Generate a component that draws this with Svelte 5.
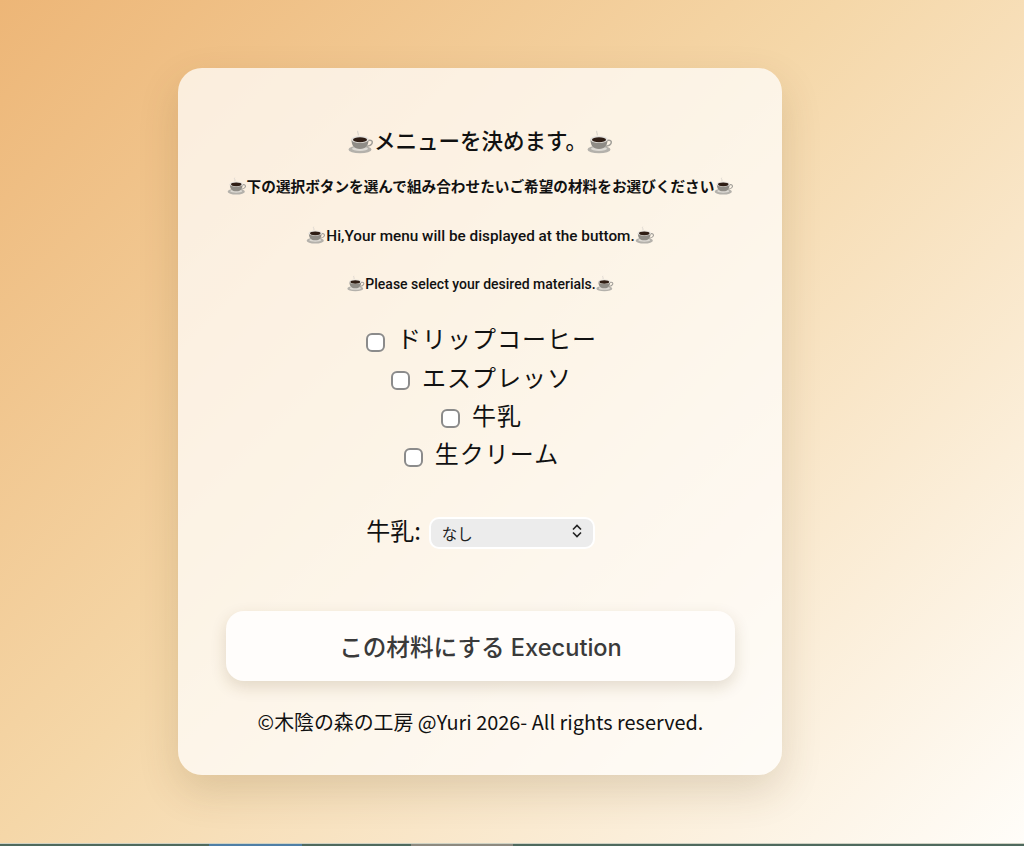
<script>
  let materials = ['ドリップコーヒー', 'エスプレッソ', '牛乳', '生クリーム'];
  let milk = 'なし';
</script>

{#snippet cup()}
  <svg class="cup" viewBox="0 0 26 24" aria-hidden="true">
    <path d="M10 1c-1.500 1.500 1.500 2.500 0 4.500" fill="none" stroke="#d9d4cd" stroke-width="1.200" />
    <ellipse cx="12" cy="19.500" rx="11.500" ry="3.800" fill="#b4b1ab" />
    <ellipse cx="12" cy="18.800" rx="8" ry="2.200" fill="#dcd9d3" />
    <path d="M3.500 9.500c0 6 2.500 9.500 8.500 9.500s8.500-3.500 8.500-9.500z" fill="#8f8c86" />
    <path d="M20 10.500c3.500-1 5 .8 4 3-.8 1.700-3 2.500-5.500 2.800" fill="none" stroke="#a19e98" stroke-width="1.500" />
    <ellipse cx="12" cy="9.500" rx="8.800" ry="3.400" fill="#e4e1dc" />
    <ellipse cx="12" cy="9.800" rx="7" ry="2.500" fill="#2e1d14" />
  </svg>
{/snippet}

<main class="page">
  <section class="card">
    <h1>{@render cup()}メニューを決めます。{@render cup()}</h1>
    <p class="ja">{@render cup()}下の選択ボタンを選んで組み合わせたいご希望の材料をお選びください{@render cup()}</p>
    <p class="en">{@render cup()}Hi,Your menu will be displayed at the buttom.{@render cup()}</p>
    <p class="en small">{@render cup()}Please select your desired materials.{@render cup()}</p>

    <div class="options">
      {#each materials as name}
        <label class="option">
          <input type="checkbox" />
          <span>{name}</span>
        </label>
      {/each}
    </div>

    <div class="milk">
      <label for="milk">牛乳:</label>
      <span class="select-wrap">
        <select id="milk" bind:value={milk}>
          <option>なし</option>
          <option>牛乳</option>
          <option>豆乳</option>
        </select>
        <svg class="chevrons" viewBox="0 0 12 16" aria-hidden="true">
          <path d="M2 6.500l4-4 4 4M2 9.500l4 4 4-4" />
        </svg>
      </span>
    </div>

    <button type="button">この材料にする Execution</button>
    <footer>©木陰の森の工房 @Yuri 2026- All rights reserved.</footer>
  </section>
</main>
<div class="desktop-strip">
  <span class="blue"></span>
  <span class="grey"></span>
</div>

<style>
  :global(body) {
    background: #fff;
  }

  .page {
    height: 843px;
    box-sizing: border-box;
    padding-top: 68px;
    display: flex;
    justify-content: center;
    background: linear-gradient(135deg, #edb677 0%, #f5d7a8 45%, #fffdf9 100%);
    font-family: "Noto Sans CJK JP", sans-serif;
    color: #111;
  }

  .card {
    width: 604px;
    height: 707px;
    margin-left: -64px;
    box-sizing: border-box;
    padding: 57px 47px 0 48px;
    border-radius: 24px;
    background: rgba(255, 255, 255, 0.72);
    box-shadow: 0 16px 40px rgba(90, 60, 20, 0.16);
    text-align: center;
  }

  .cup {
    width: 26px;
    height: 24px;
    vertical-align: -5px;
  }

  h1 {
    margin: 0;
    height: 30px;
    font-size: 21.500px;
    line-height: 30px;
    font-weight: 500;
  }

  .ja {
    margin: 20px 0 0;
    height: 22px;
    font-size: 14.650px;
    line-height: 22px;
    font-weight: 700;
    white-space: nowrap;
  }

  .ja .cup,
  .en .cup {
    width: 20px;
    height: 18px;
    vertical-align: -3px;
  }

  .en {
    margin: 28px 0 0;
    height: 22px;
    font-family: Roboto, "Noto Sans", sans-serif;
    font-size: 15.300px;
    line-height: 22px;
    font-weight: 500;
  }

  .en.small {
    margin-top: 26px;
    font-size: 14px;
  }

  .en.small .cup {
    width: 18px;
    height: 17px;
  }

  .options {
    margin-top: 27px;
    padding-left: 2px;
    display: flex;
    flex-direction: column;
    align-items: center;
  }

  .option {
    height: 38.400px;
    display: flex;
    align-items: center;
    gap: 12px;
    font-size: 24px;
    letter-spacing: 1px;
    line-height: 38px;
  }

  .option span {
    margin-top: -6px;
  }

  input {
    appearance: none;
    width: 19px;
    height: 19px;
    margin: 2px 0 0;
    box-sizing: border-box;
    border: 2.500px solid #8b8b8b;
    border-radius: 6px;
    background: #fff;
  }

  .milk {
    margin-top: 38px;
    display: flex;
    justify-content: center;
    align-items: center;
    gap: 8px;
    font-size: 24px;
    line-height: 32px;
  }

  .select-wrap {
    position: relative;
    display: block;
    width: 166px;
    height: 32px;
  }

  select {
    appearance: none;
    width: 100%;
    height: 100%;
    box-sizing: border-box;
    padding: 0 11px;
    border: 2px solid #fff;
    border-radius: 10px;
    background: #ececec;
    color: #222;
    font-family: inherit;
    font-size: 15.500px;
  }

  .chevrons {
    position: absolute;
    top: 9px;
    right: 12px;
    width: 12px;
    height: 16px;
    fill: none;
    stroke: #222;
    stroke-width: 1.600;
    pointer-events: none;
  }

  button {
    display: block;
    width: 509px;
    height: 70px;
    margin-top: 65px;
    border: 0;
    border-radius: 18px;
    background: #fffdfb;
    box-shadow: 0 6px 16px rgba(90, 60, 20, 0.16);
    color: #3a3a3a;
    font-family: Inter, "Noto Sans CJK JP", sans-serif;
    font-size: 23.600px;
    font-weight: 500;
  }

  footer {
    margin-top: 25px;
    font-size: 19.900px;
    line-height: 32px;
    white-space: nowrap;
  }

  .desktop-strip {
    height: 3px;
    display: flex;
    background: #4f6a5e;
    border-top: 1px solid #cfd2c4;
    box-sizing: border-box;
  }

  .blue {
    width: 93px;
    margin-left: 209px;
    background: #4f7fa6;
  }

  .grey {
    width: 102px;
    margin-left: 109px;
    background: #8d8a80;
  }
</style>
